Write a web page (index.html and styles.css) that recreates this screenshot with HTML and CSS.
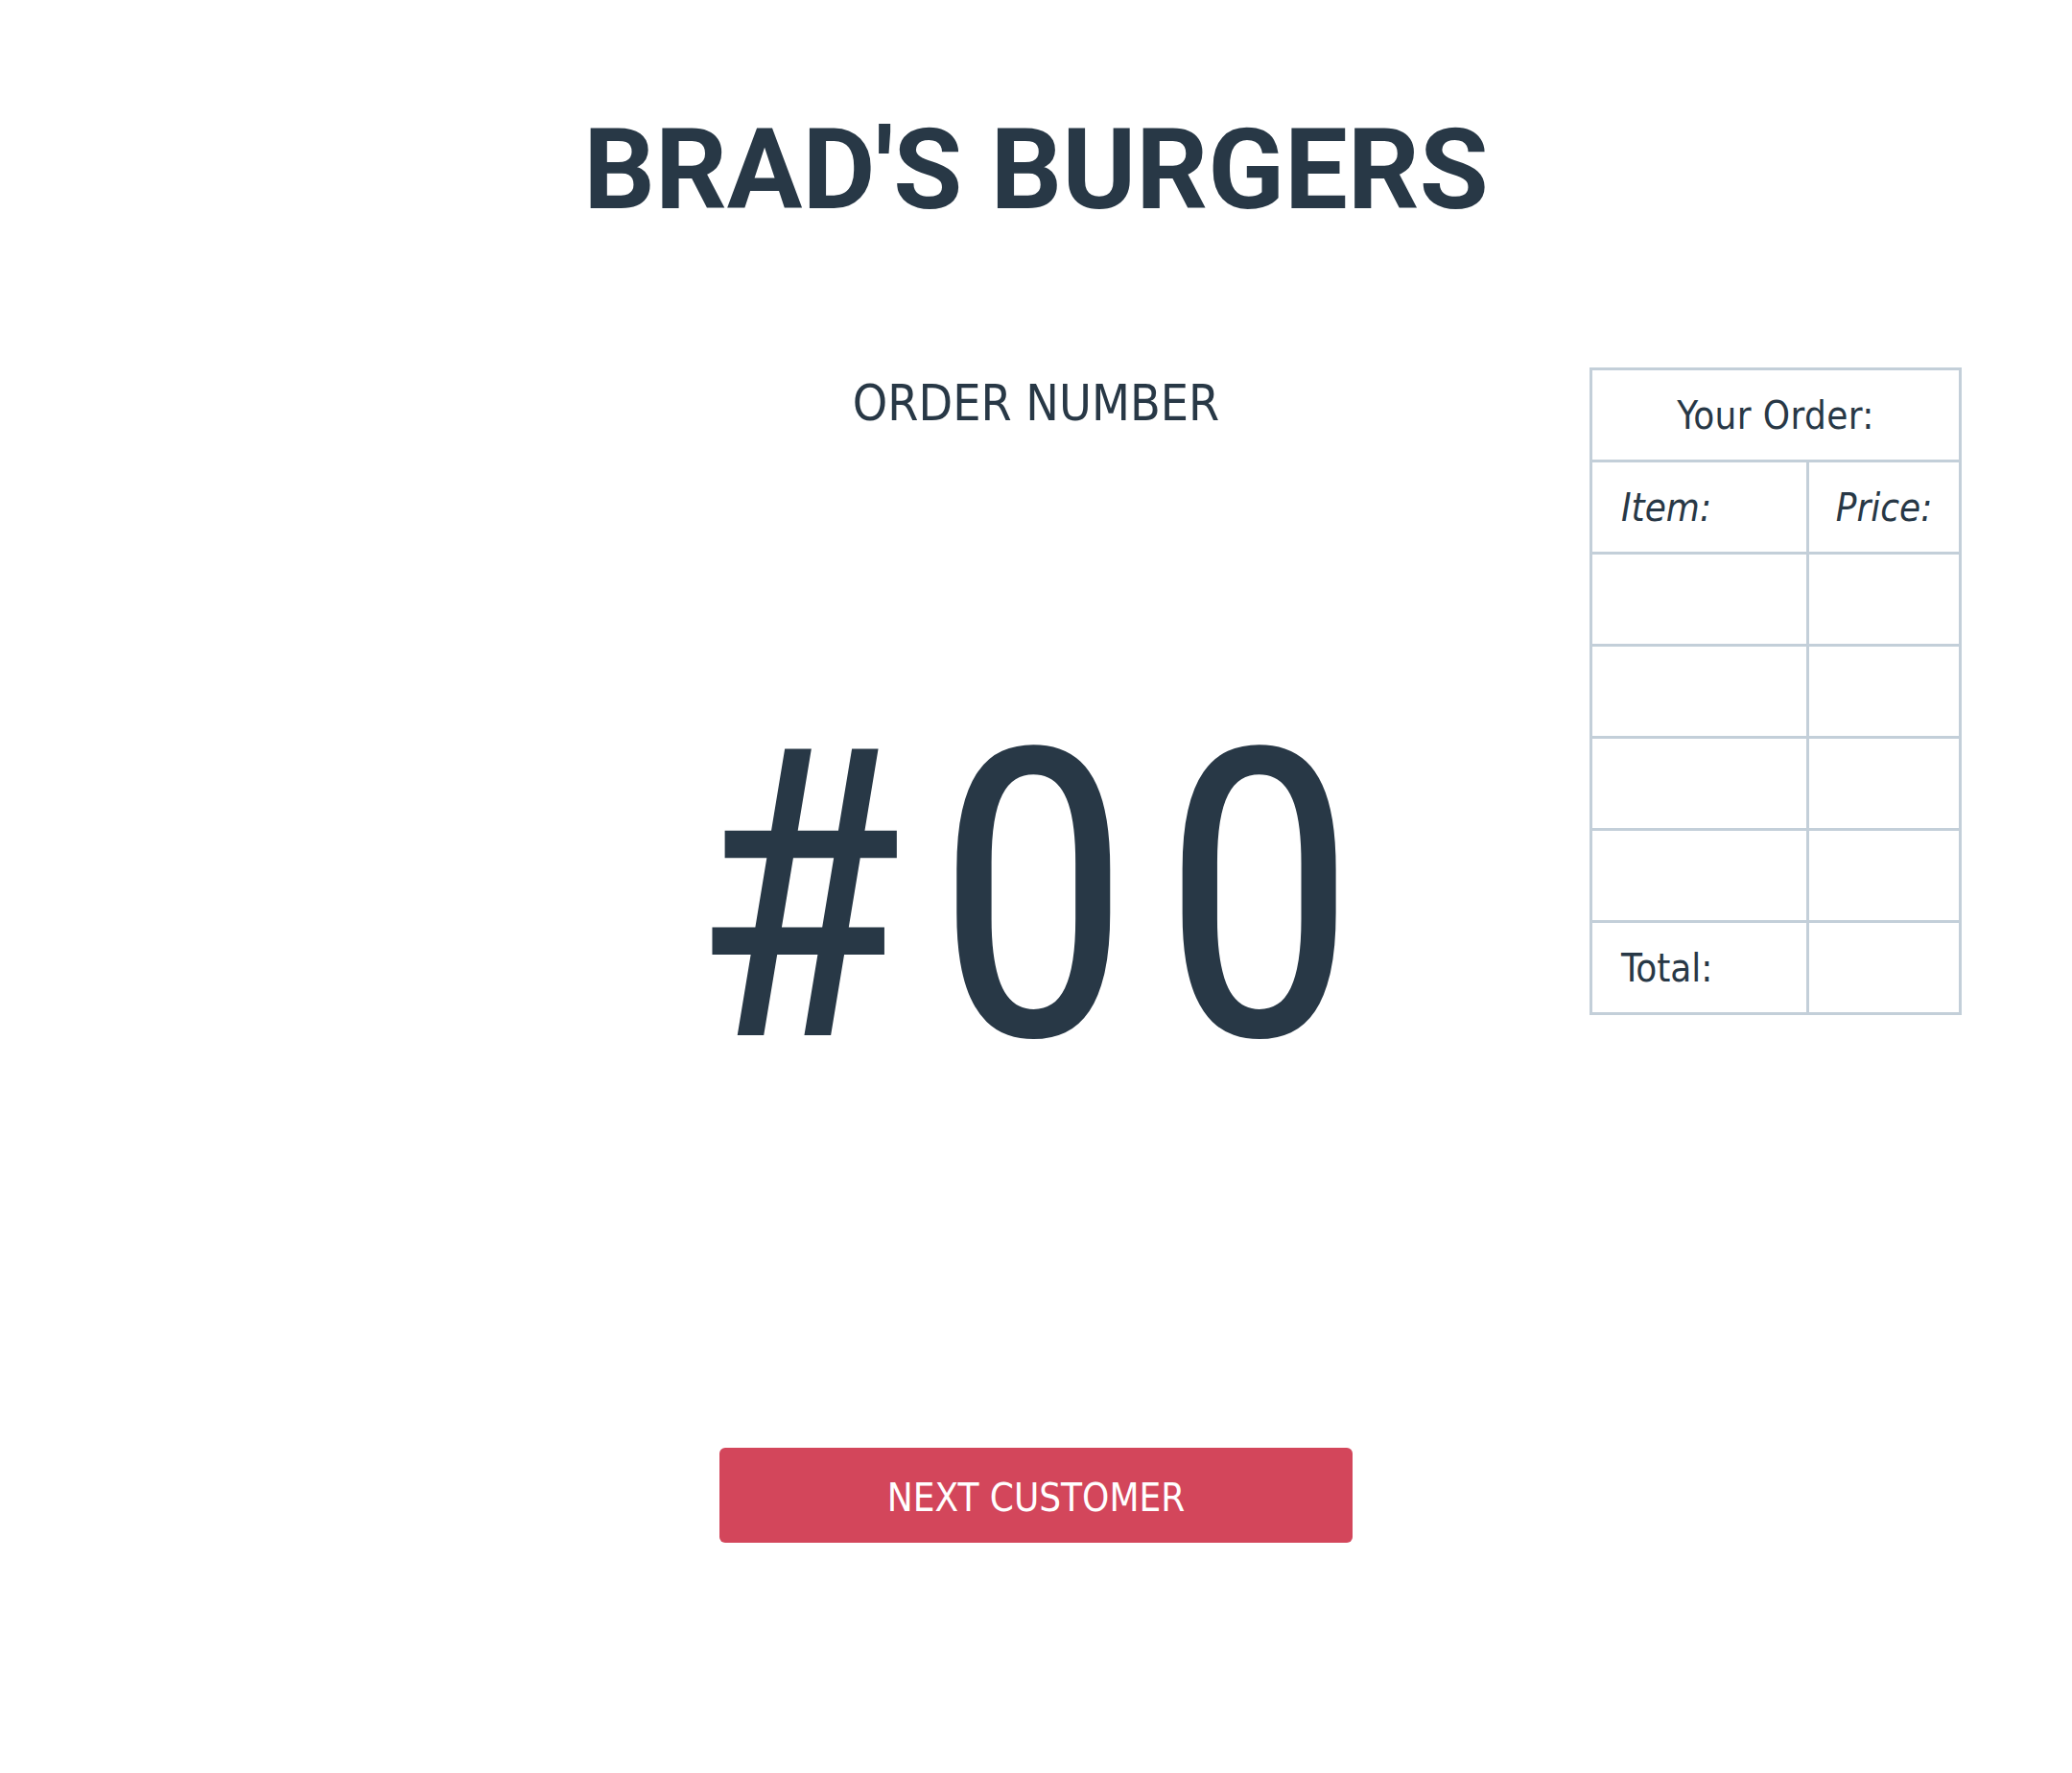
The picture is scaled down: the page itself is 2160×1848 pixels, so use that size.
FILE: index.html
```html
<!DOCTYPE html>
<html lang="en">
<head>
<meta charset="utf-8">
<title>Brad's Burgers</title>
<link rel="stylesheet" href="styles.css">
</head>
<body>
<header class="header">
  <h1 class="brand">BRAD'S BURGERS</h1>
</header>
<main class="layout">
  <section class="display">
    <h2 class="order-label">ORDER NUMBER</h2>
    <div class="order-number">#00</div>
    <button class="next-btn" type="button">NEXT CUSTOMER</button>
  </section>
  <aside class="receipt-wrap">
    <table class="receipt">
      <colgroup><col class="col-item"><col class="col-price"></colgroup>
      <tr><th colspan="2" class="receipt-title">Your Order:</th></tr>
      <tr><td class="cell-left head">Item:</td><td class="cell-center head">Price:</td></tr>
      <tr><td></td><td></td></tr>
      <tr><td></td><td></td></tr>
      <tr><td></td><td></td></tr>
      <tr><td></td><td></td></tr>
      <tr><td class="cell-left">Total:</td><td></td></tr>
    </table>
  </aside>
</main>
</body>
</html>
```
FILE: styles.css
```css
html, body {
  margin: 0;
  padding: 0;
  background: #ffffff;
}
body {
  color: #283846;
  font-family: "DejaVu Sans Condensed", "DejaVu Sans", sans-serif;
  font-stretch: condensed;
}
.header {
  padding-top: 119px;
  text-align: center;
}
.brand {
  margin: 0;
  font-family: Roboto, "Liberation Sans", sans-serif;
  font-stretch: normal;
  font-weight: 700;
  font-size: 117px;
  line-height: 1;
  letter-spacing: 0;
}
.layout {
  margin-top: 147px;
  display: grid;
  grid-template-columns: 1fr 700px 1fr;
  align-items: start;
}
.display {
  grid-column: 2;
  display: flex;
  flex-direction: column;
  align-items: center;
  padding-top: 12px;
}
.order-label {
  margin: 0;
  font-weight: 400;
  font-size: 51.5px;
  line-height: 1;
}
.order-number {
  margin-top: 279px;
  font-family: "Roboto Condensed", Roboto, sans-serif;
  font-stretch: 75%;
  font-weight: 400;
  font-size: 420px;
  line-height: 1;
  letter-spacing: 28px;
}
.next-btn {
  margin-top: 363px;
  width: 660px;
  height: 99px;
  border: 0;
  border-radius: 6px;
  background: #d3465b;
  color: #ffffff;
  font-family: "DejaVu Sans Condensed", "DejaVu Sans", sans-serif;
  font-stretch: condensed;
  font-size: 40px;
  line-height: 1;
  padding: 5px 0 0;
  display: flex;
  align-items: center;
  justify-content: center;
}
.receipt-wrap {
  grid-column: 3;
  display: flex;
  justify-content: flex-end;
  padding-right: 115px;
}
.receipt {
  border-collapse: collapse;
  table-layout: fixed;
  width: 385px;
  border: 3px solid #c3cfd9;
  font-size: 40px;
}
.col-item { width: 226px; }
.col-price { width: 159px; }
.receipt th,
.receipt td {
  border: 3px solid #c3cfd9;
  height: 93px;
  padding: 0;
  vertical-align: middle;
  font-weight: 400;
  line-height: 1;
}
.receipt-title {
  text-align: center;
  letter-spacing: 0.4px;
}
.cell-left {
  text-align: left;
  padding-left: 30px !important;
}
.cell-center {
  text-align: center;
}
.head {
  font-style: italic;
}
```
